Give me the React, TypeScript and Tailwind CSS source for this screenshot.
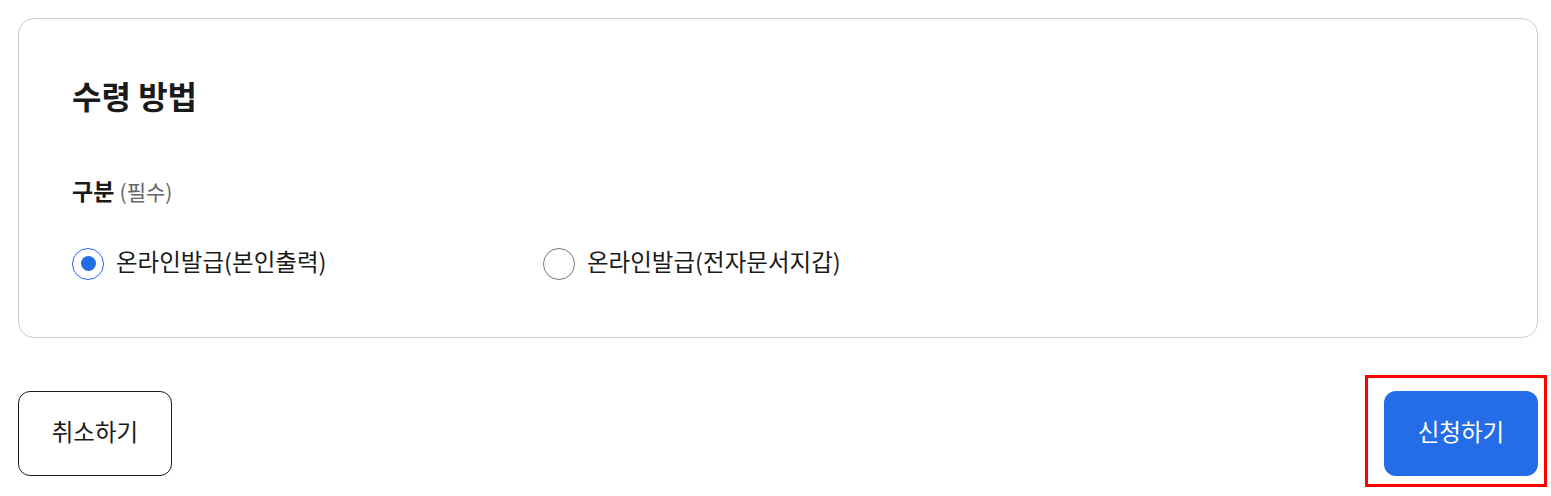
import React, { useState } from 'react';

const font = { fontFamily: '"Noto Sans CJK KR", "Noto Sans", sans-serif' };

const Radio = ({ checked, label, onClick }: { checked: boolean; label: string; onClick: () => void }) => (
  <button onClick={onClick} className="flex items-center gap-3 text-[23.5px] text-[#1a1a1a]">
    <span
      className={
        checked
          ? 'flex h-8 w-8 items-center justify-center rounded-full border border-[#256ce8] bg-white'
          : 'flex h-8 w-8 items-center justify-center rounded-full border border-[#767676] bg-white'
      }
    >
      {checked && <span className="h-[15px] w-[15px] rounded-full bg-[#256ce8]" />}
    </span>
    <span className="mb-[5px] leading-8">{label}</span>
  </button>
);

export default function App() {
  const [method, setMethod] = useState(0);

  return (
    <div style={font} className="min-h-[496px] bg-white pt-[18px]">
      <div className="ml-[18px] w-[1520px]">
        <section className="h-[320px] rounded-2xl border border-[#cccccc] px-[53px] pt-[54px]">
          <h2 className="text-[32px] font-bold leading-11 text-[#1a1a1a]">수령 방법</h2>
          <div className="mt-[57px] text-[23px] font-bold leading-8 text-[#1a1a1a]">
            구분 <span className="text-[21px] font-normal text-[#666666]">(필수)</span>
          </div>
          <div className="mt-[38px] flex items-center">
            <div className="w-[471px]">
              <Radio checked={method === 0} label="온라인발급(본인출력)" onClick={() => setMethod(0)} />
            </div>
            <Radio checked={method === 1} label="온라인발급(전자문서지갑)" onClick={() => setMethod(1)} />
          </div>
        </section>

        <div className="mt-[53px] flex items-center justify-between">
          <button className="h-[85px] w-[154px] rounded-xl border border-[#1a1a1a] bg-white pb-1 text-[23.5px] text-[#1a1a1a]">
            취소하기
          </button>
          <div className="relative">
            <button className="h-[85px] w-[154px] rounded-xl bg-[#256ce8] pb-1 text-[23.5px] text-white">신청하기</button>
            <div className="pointer-events-none absolute -left-[19px] -top-[16px] -right-[9px] -bottom-[11px] border-[3px] border-[#ff0000]" />
          </div>
        </div>
      </div>
    </div>
  );
}
